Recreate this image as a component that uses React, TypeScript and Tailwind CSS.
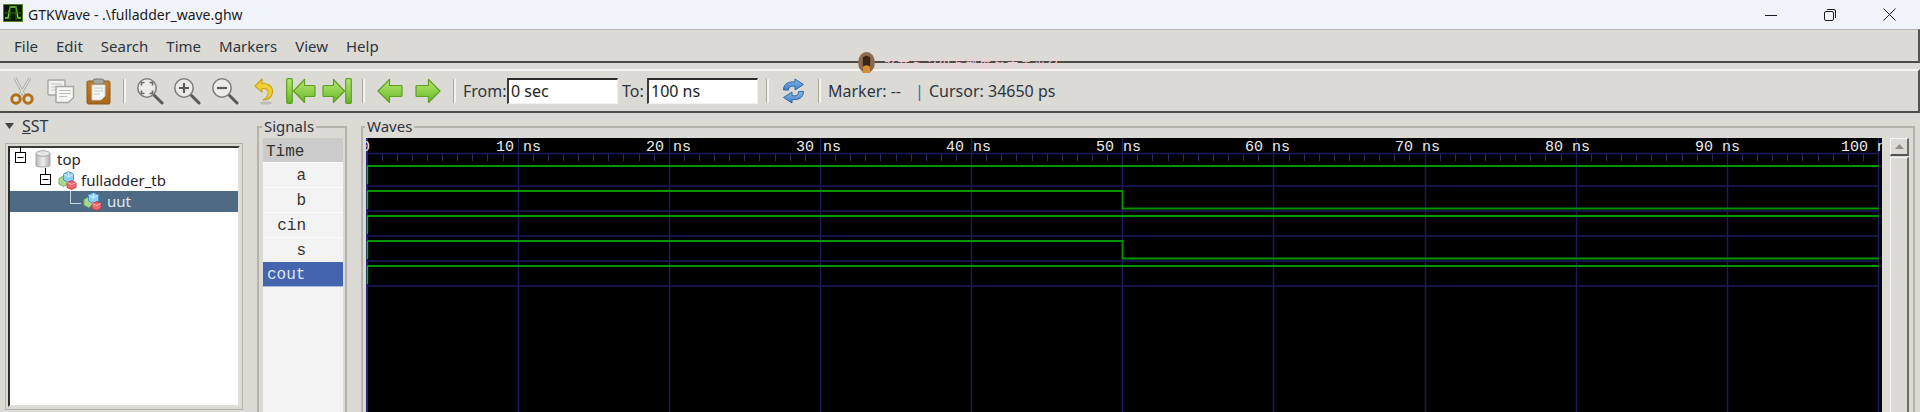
import React from "react";

const GREEN = "#009400";
const GRID = "#1b1b5e";

function Defs() {
  return (
    <svg width="0" height="0" className="absolute">
      <defs>
        <linearGradient id="gr" x1="0" y1="0" x2="0" y2="1">
          <stop offset="0" stopColor="#b4e574" />
          <stop offset="0.55" stopColor="#8ccf4a" />
          <stop offset="1" stopColor="#62b32a" />
        </linearGradient>
        <linearGradient id="cyl" x1="0" y1="0" x2="1" y2="0">
          <stop offset="0" stopColor="#b9b9b9" />
          <stop offset="0.5" stopColor="#ececec" />
          <stop offset="1" stopColor="#b0b0b0" />
        </linearGradient>
        <linearGradient id="br" x1="0" y1="0" x2="0" y2="1">
          <stop offset="0" stopColor="#c07f2e" />
          <stop offset="1" stopColor="#a8671a" />
        </linearGradient>
        <linearGradient id="bl" x1="0" y1="0" x2="0" y2="1">
          <stop offset="0" stopColor="#8cb6e6" />
          <stop offset="1" stopColor="#3f7fc9" />
        </linearGradient>
      </defs>
    </svg>
  );
}

function Cut() {
  return (
    <svg width="24" height="28" viewBox="0 0 24 28" className="shrink-0">
      <path d="M5 1 L14 18 M20 1 L10 18" stroke="#a9a9a4" strokeWidth="3" fill="none" />
      <path d="M5 1 L14 18 M20 1 L10 18" stroke="#e6e6e2" strokeWidth="1.2" fill="none" />
      <circle cx="6" cy="22" r="4.2" fill="#e0e0d8" stroke="#b26f1c" strokeWidth="3" />
      <circle cx="18" cy="22" r="4.2" fill="#e0e0d8" stroke="#b26f1c" strokeWidth="3" />
    </svg>
  );
}
function Copy() {
  return (
    <svg width="28" height="25" viewBox="0 0 28 25" className="shrink-0">
      <rect x="1" y="1" width="17" height="15" rx="1" fill="#f2f2f0" stroke="#a5a5a0" strokeWidth="1.4" />
      <path d="M4 5h11M4 8h11M4 11h9" stroke="#c4c4c0" strokeWidth="1" />
      <path d="M9 7.5h17.5v11l-5 5H9z" fill="#f6f6f4" stroke="#a5a5a0" strokeWidth="1.4" />
      <path d="M12 11.5h12M12 14.5h12M12 17.5h8" stroke="#bcbcb8" strokeWidth="1" />
    </svg>
  );
}
function Paste() {
  return (
    <svg width="25" height="27" viewBox="0 0 25 27" className="shrink-0">
      <rect x="1" y="3" width="23" height="23" rx="1.5" fill="url(#br)" stroke="#8c5a17" />
      <rect x="7" y="1" width="11" height="5" rx="2" fill="#a8a8a2" stroke="#77776f" />
      <path d="M6 7h13v11l-4 4H6z" fill="#f7f7f5" stroke="#cfcfca" />
      <path d="M8 10h9M8 13h9M8 16h6" stroke="#c4c4c0" strokeWidth="1" />
    </svg>
  );
}
function Zoom({ kind }: { kind: "fit" | "in" | "out" }) {
  return (
    <svg width="28" height="28" viewBox="0 0 28 28" className="shrink-0">
      <path d="M17 17 L26 26" stroke="#5a5a57" strokeWidth="3" strokeLinecap="round" />
      <circle cx="11" cy="11" r="9.2" fill="#ecebe7" stroke="#80807b" strokeWidth="1.6" />
      {kind === "in" && <path d="M6 11h10M11 6v10" stroke="#5b5b58" strokeWidth="2.2" />}
      {kind === "out" && <path d="M6 11h10" stroke="#5b5b58" strokeWidth="2.2" />}
      {kind === "fit" && (
        <path d="M5.5 8.5v-3h3M13.5 5.5h3v3M16.5 13.5v3h-3M8.5 16.5h-3v-3" stroke="#6b6b68" strokeWidth="1.6" fill="none" />
      )}
    </svg>
  );
}
function Undo() {
  return (
    <svg width="20" height="27" viewBox="0 0 20 27" className="shrink-0">
      <ellipse cx="12" cy="25" rx="6" ry="1.6" fill="#bdbbb6" />
      <path d="M8 1 L1 8 L8 14 L8 10.5 C13 10 15 12.5 14 16 C13.5 19 11 21 9 22 C14.5 22.5 19 18 18.5 12.5 C18 7.5 13.5 5 8 5.5 Z" fill="#f1cf3a" stroke="#cda414" strokeWidth="1.1" strokeLinejoin="round" />
    </svg>
  );
}
function ArrowFirst() {
  return (
    <svg width="30" height="26" viewBox="0 0 30 26" className="shrink-0">
      <rect x="0.7" y="0.7" width="5.6" height="24.6" rx="1" fill="url(#gr)" stroke="#5f9f22" strokeWidth="1.2" />
      <path d="M7.5 13 L18.5 1.5 V7.5 H28 Q29 7.5 29 8.5 V17.5 Q29 18.5 28 18.5 H18.5 V24.5 Z" fill="url(#gr)" stroke="#5f9f22" strokeWidth="1.2" strokeLinejoin="round" />
    </svg>
  );
}
function ArrowLast() {
  return (
    <svg width="30" height="26" viewBox="0 0 30 26" className="shrink-0" style={{ transform: "scaleX(-1)" }}>
      <rect x="0.7" y="0.7" width="5.6" height="24.6" rx="1" fill="url(#gr)" stroke="#5f9f22" strokeWidth="1.2" />
      <path d="M7.5 13 L18.5 1.5 V7.5 H28 Q29 7.5 29 8.5 V17.5 Q29 18.5 28 18.5 H18.5 V24.5 Z" fill="url(#gr)" stroke="#5f9f22" strokeWidth="1.2" strokeLinejoin="round" />
    </svg>
  );
}
function ArrowLeft({ flip }: { flip?: boolean }) {
  return (
    <svg width="26" height="26" viewBox="0 0 26 26" className="shrink-0" style={flip ? { transform: "scaleX(-1)" } : undefined}>
      <path d="M1 13 L12.5 1.5 V7.5 H24 Q25 7.5 25 8.5 V17.5 Q25 18.5 24 18.5 H12.5 V24.5 Z" fill="url(#gr)" stroke="#5f9f22" strokeWidth="1.2" strokeLinejoin="round" />
    </svg>
  );
}
function Refresh() {
  return (
    <svg width="23" height="26" viewBox="0 0 23 26" className="shrink-0">
      <path d="M1.5 12 C1.5 6 6.5 3 13 4 L13 1 L21.5 6.5 L13 12 L13 8.5 C9 7.5 6.5 9 6.5 12 Z" fill="url(#bl)" stroke="#2f69ae" strokeWidth="1" strokeLinejoin="round" />
      <path d="M21.5 13.5 C21.5 19.5 16.5 22.5 10 21.5 L10 25 L1.5 19.5 L10 14 L10 17.5 C14 18.5 16.5 17 16.5 13.5 Z" fill="url(#bl)" stroke="#2f69ae" strokeWidth="1" strokeLinejoin="round" />
    </svg>
  );
}
function Sep() {
  return <div className="w-[3px] h-[24px] shrink-0 border-l border-l-[#a9a7a0] border-r-2 border-r-[#f4f3f0]" />;
}
function Expander({ tick }: { tick: number }) {
  return (
    <svg width="11" height="17" viewBox="0 0 11 17" className="shrink-0" style={{ marginTop: tick }}>
      <path d="M5.5 0V6" stroke="#000" strokeWidth="1" />
      <rect x="0.5" y="6.5" width="10" height="10" fill="#fff" stroke="#000" />
      <path d="M2.5 11.5h6" stroke="#000" />
    </svg>
  );
}
function Cylinder() {
  return (
    <svg width="16" height="19" viewBox="0 0 16 19" className="shrink-0">
      <path d="M1 3.5V15.5C1 17.5 15 17.5 15 15.5V3.5Z" fill="url(#cyl)" stroke="#a8a8a8" />
      <ellipse cx="8" cy="3.5" rx="7" ry="2.8" fill="#e6e6e6" stroke="#a8a8a8" />
    </svg>
  );
}
function Cubes() {
  return (
    <svg width="19" height="19" viewBox="0 0 19 19" className="shrink-0">
      <path d="M1 7.5 L5.5 5 L10 7.5 V13 L5.5 15.5 L1 13Z" fill="#a9d88e" stroke="#6ea956" strokeWidth="0.9" />
      <path d="M5.5 3 L10.5 0.7 L15.5 3 V9 L10.5 11.5 L5.5 9Z" fill="#8fd0f2" stroke="#3f8fc4" strokeWidth="0.9" />
      <path d="M10.5 1 V6 M5.5 3 L10.5 6 L15.5 3" stroke="#e4f6ff" strokeWidth="0.8" fill="none" />
      <path d="M9 11.5 L13.5 9.7 L18 11.5 V16.5 L13.5 18.4 L9 16.5Z" fill="#ec6a70" stroke="#c23a42" strokeWidth="0.9" />
      <path d="M9 11.5 L13.5 13.5 L18 11.5" stroke="#f9c5c8" strokeWidth="0.8" fill="none" />
    </svg>
  );
}

function WaveCanvas() {
  const grids = [1, 2, 3, 4, 5, 6, 7, 8, 9, 10].map((n) => 366.5 + 151.15 * n);
  const ticks = Array.from({ length: 100 }, (_, i) => 366.5 + 15.115 * i);
  const labels: [string, number][] = [
    ["0", 361], ["10 ns", 496], ["20 ns", 646], ["30 ns", 796], ["40 ns", 946], ["50 ns", 1096],
    ["60 ns", 1245], ["70 ns", 1395], ["80 ns", 1545], ["90 ns", 1695], ["100 ns", 1841],
  ];
  const lineY = [186, 211, 236, 261, 286];
  return (
    <svg width="1516" height="274" viewBox="366 138 1516 274" className="block shrink-0 bg-black">
      {ticks.map((x) => (
        <path key={x} d={`M${Math.round(x) + 0.5} 153V161`} stroke="#2c2c66" strokeWidth="1" />
      ))}
      <path d="M367 153.5H1878" stroke={GRID} strokeWidth="1.6" />
      <path d="M367 138V412" stroke="#26267e" strokeWidth="2" />
      {grids.map((x) => (
        <path key={x} d={`M${Math.round(x) + 0.5} 138V412`} stroke={GRID} strokeWidth="1.4" />
      ))}
      {lineY.map((y) => (
        <path key={y} d={`M367 ${y}H1878`} stroke={GRID} strokeWidth="1.6" />
      ))}
      <path d="M367 166H1879" stroke={GREEN} strokeWidth="2" />
      <path d="M367 191H1122.5V208.5H1879" stroke={GREEN} strokeWidth="1.8" fill="none" />
      <path d="M367 216H1879" stroke={GREEN} strokeWidth="2" />
      <path d="M367 241H1122.5V258.5H1879" stroke={GREEN} strokeWidth="1.8" fill="none" />
      <path d="M367 266H1879" stroke={GREEN} strokeWidth="2" />
      {[166, 191, 216, 241, 266].map((y) => (
        <path key={y} d={`M367.5 ${y}V${y + 18}`} stroke="#00c800" strokeWidth="1.4" />
      ))}
      {labels.map(([t, x]) => (
        <text key={t} x={x} y={151} fill="#eeeeee" fontSize="15" fontFamily="'Liberation Mono', monospace" xmlSpace="preserve">
          {t}
        </text>
      ))}
    </svg>
  );
}

const menus = ["File", "Edit", "Search", "Time", "Markers", "View", "Help"];
const signals = ["a", "b", "cin", "s"];

export default function App() {
  return (
    <div className="relative w-[1920px] h-[412px] overflow-hidden flex flex-col bg-[#dcdad5] text-[#2e3440] font-['Noto_Sans','Open_Sans',sans-serif]">
      <Defs />
      {/* Title bar */}
      <div className="h-[29px] shrink-0 flex items-center bg-[#f0f3f9] pl-[2px] text-[#1b1b1b] text-[14px]">
        <svg width="20" height="18" viewBox="0 0 20 18" className="shrink-0 ml-px mt-[-3px]">
          <rect width="20" height="18" fill="#0b1a08" />
          <rect x="0" y="0" width="20" height="18" fill="none" stroke="#6aa62a" strokeWidth="1.5" />
          <path d="M2 14H5L7 3H13L15 14H18" stroke="#7ee03a" strokeWidth="1.3" fill="none" />
          <path d="M2 9H18M7 2V16M13 2V16" stroke="#2e6a12" strokeWidth="1" />
        </svg>
        <span className="ml-[5px] mt-[-1px]">GTKWave - .\fulladder_wave.ghw</span>
        <div className="ml-auto flex items-center">
          <div className="w-[58px] flex justify-center">
            <svg width="12" height="12" viewBox="0 0 12 12"><path d="M0 6.5H12" stroke="#1b1b1b" /></svg>
          </div>
          <div className="w-[60px] flex justify-center">
            <svg width="12" height="12" viewBox="0 0 12 12">
              <rect x="0.5" y="2.5" width="9" height="9" rx="1.5" fill="none" stroke="#1b1b1b" />
              <path d="M3 0.5H10Q11.5 0.5 11.5 2V9" fill="none" stroke="#1b1b1b" />
            </svg>
          </div>
          <div className="w-[58px] flex justify-center">
            <svg width="13" height="13" viewBox="0 0 13 13"><path d="M0.5 0.5L12.5 12.5M12.5 0.5L0.5 12.5" stroke="#1b1b1b" /></svg>
          </div>
          <div className="w-[2px]" />
        </div>
      </div>

      {/* Menu bar */}
      <div className="h-[34px] shrink-0 flex items-center gap-[18px] pl-[14px] pt-[2px] border-t border-t-[#b5b3ae] border-b-2 border-b-[#4c4b46] border-r-2 border-r-[#55544f] text-[15px]">
        {menus.map((m) => (
          <span key={m}>{m}</span>
        ))}
      </div>

      {/* Toolbar */}
      <div className="mt-[6px] h-[44px] shrink-0 flex items-center pl-[10px] border-t-2 border-t-[#f5f4f1] border-b-2 border-b-[#4c4b46] border-r-2 border-r-[#55544f] text-[16px]">
        <Cut />
        <div className="ml-[13px]"><Copy /></div>
        <div className="ml-[11px]"><Paste /></div>
        <div className="ml-[12px]"><Sep /></div>
        <div className="ml-[10px]"><Zoom kind="fit" /></div>
        <div className="ml-[9px]"><Zoom kind="in" /></div>
        <div className="ml-[10px]"><Zoom kind="out" /></div>
        <div className="ml-[15px]"><Undo /></div>
        <div className="ml-[12px]"><ArrowFirst /></div>
        <div className="ml-[6px]"><ArrowLast /></div>
        <div className="ml-[10px]"><Sep /></div>
        <div className="ml-[12px]"><ArrowLeft /></div>
        <div className="ml-[12px]"><ArrowLeft flip /></div>
        <div className="ml-[12px]"><Sep /></div>
        <span className="ml-[7px] w-[44px]">From:</span>
        <div className="w-[111px] h-[26px] bg-white border-t-2 border-t-[#2b2b2b] border-l-2 border-l-[#3c3c3c] border-r border-r-[#f3f2ef] border-b border-b-[#f3f2ef] pl-[2px] leading-[22px] text-[#222]">0 sec</div>
        <span className="ml-[4px] w-[25px]">To:</span>
        <div className="w-[111px] h-[26px] bg-white border-t-2 border-t-[#2b2b2b] border-l-2 border-l-[#3c3c3c] border-r border-r-[#f3f2ef] border-b border-b-[#f3f2ef] pl-[2px] leading-[22px] text-[#222]">100 ns</div>
        <div className="ml-[8px]"><Sep /></div>
        <div className="ml-[13px]"><Refresh /></div>
        <div className="ml-[13px]"><Sep /></div>
        <span className="ml-[7px] w-[87px]">Marker: --</span>
        <span className="w-[14px] text-[#2f6bb0]">|</span>
        <span>Cursor: 34650 ps</span>
      </div>

      {/* Panes */}
      <div className="flex-1 min-h-0 flex">
        {/* SST */}
        <div className="w-[257px] shrink-0 flex flex-col pl-[5px] pr-[14px] pb-[2px]">
          <div className="h-[30px] shrink-0 flex items-center pb-[5px] text-[16px]">
            <svg width="9" height="6" viewBox="0 0 9 6" className="mr-[8px]"><path d="M0 0H9L4.5 6Z" fill="#44433f" /></svg>
            <span><span className="underline">S</span>ST</span>
          </div>
          <div className="flex-1 min-h-0 border border-[#b4b2ab] p-[2px]">
            <div className="h-full bg-white border-t-2 border-t-[#3a3a38] border-l-2 border-l-[#2d2d2b] border-r-2 border-r-[#dfdeda] border-b-2 border-b-[#dfdeda] pt-[1px] text-[15px] text-[#2a2530]">
              <div className="h-[21px] flex items-center pl-[5px]">
                <div className="mt-[-2px]"><Expander tick={-8} /></div>
                <div className="ml-[9px]"><Cylinder /></div>
                <span className="ml-[6px]">top</span>
              </div>
              <div className="h-[21px] flex items-center pl-[30px]">
                <div className="mt-[-3px]"><Expander tick={-6} /></div>
                <div className="ml-[7px]"><Cubes /></div>
                <span className="ml-[4px]">fulladder_tb</span>
              </div>
              <div className="h-[21px] flex items-center pl-[60px] bg-[#4e6a85] text-[#e2e8ee]">
                <svg width="12" height="14" viewBox="0 0 12 14" className="shrink-0 mt-[-7px]"><path d="M0.5 0V12.5H11" stroke="#c9d3dc" fill="none" /></svg>
                <div className="ml-px"><Cubes /></div>
                <span className="ml-[5px]">uut</span>
              </div>
            </div>
          </div>
        </div>

        {/* Signals */}
        <div className="w-[90px] shrink-0 relative mt-[13px] border-l-2 border-l-[#b4b2ab] border-t-2 border-t-[#b4b2ab] border-r-2 border-r-[#b4b2ab] pt-[10px] pl-[4px] pr-[2px] flex flex-col">
          <span className="absolute left-[3px] top-[-13px] px-[2px] bg-[#dcdad5] text-[15px] leading-[22px]">Signals</span>
          <div className="h-full bg-[#f3f3f3] flex flex-col font-['Liberation_Mono',monospace] text-[16px] text-[#333]">
            <div className="h-[24px] shrink-0 bg-[#cbcbcb] pl-[3px] leading-[28px]">Time</div>
            {signals.map((s) => (
              <div key={s} className="h-[25px] shrink-0 border-t border-t-[#fbfbfb] text-right pr-[37px] leading-[26px]">{s}</div>
            ))}
            <div className="h-[25px] shrink-0 bg-[#4464ad] text-[#dfe6f4] pl-[4px] leading-[26px] border-b border-b-[#a9b8dc]">cout</div>
          </div>
        </div>

        {/* Waves */}
        <div className="ml-[14px] w-[1554px] shrink-0 relative mt-[13px] border-l-2 border-l-[#b4b2ab] border-t-2 border-t-[#b4b2ab] border-r-2 border-r-[#b4b2ab] pt-[10px] pl-[3px] flex">
          <span className="absolute left-[2px] top-[-13px] px-[2px] bg-[#dcdad5] text-[15px] leading-[22px]">Waves</span>
          <WaveCanvas />
          <div className="ml-[8px] w-[19px] flex flex-col shrink-0">
            <div className="h-[18px] bg-[#dcdad5] border-t border-l border-t-[#f6f5f2] border-l-[#f6f5f2] border-r-2 border-b-2 border-r-[#6c6b66] border-b-[#55544f] flex items-center justify-center">
              <svg width="9" height="5" viewBox="0 0 9 5"><path d="M0 5L4.5 0L9 5Z" fill="#8f8e89" /></svg>
            </div>
            <div className="flex-1 mt-px bg-[#dcdad5] border-t border-l border-t-[#f6f5f2] border-l-[#f6f5f2] border-r-2 border-r-[#6c6b66]" />
          </div>
        </div>
      </div>

      {/* Watermark overlay */}
      <div className="absolute left-[857px] top-[52px] flex items-center h-[21px]">
        <svg width="19" height="21" viewBox="0 0 17 20" className="shrink-0">
          <ellipse cx="8.5" cy="10" rx="8" ry="10" fill="#8d6a4e" />
          <path d="M5 5Q8.5 2 12 5V18H5Z" fill="#3a261a" />
          <path d="M5 14Q8.5 11 12 14V20H5Z" fill="#d98e2c" />
        </svg>
        <span className="ml-[8px] text-[12px] text-[#f8ccd8] font-['Noto_Sans_CJK_JP',sans-serif] tracking-[1.6px] whitespace-nowrap">ヤサミンのお部屋をチェック</span>
      </div>
    </div>
  );
}
